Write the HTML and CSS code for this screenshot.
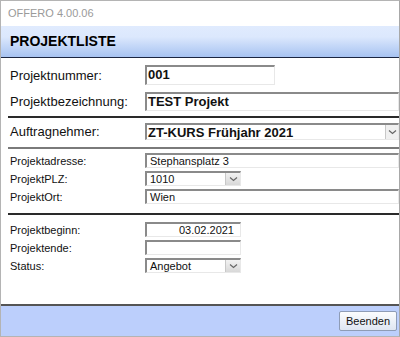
FILE: index.html
```html
<!DOCTYPE html>
<html lang="de">
<head>
  <meta charset="UTF-8" />
  <title>OFFERO 4.00.06</title>
  <link rel="stylesheet" href="styles.css">
</head>
<body>
  <div class="window">
    <div class="titlebar">OFFERO 4.00.06</div>
    <header class="caption">PROJEKTLISTE</header>

    <main class="content">
      <section class="group group-top">
        <div class="row row-a">
          <label>Projektnummer:</label>
          <div class="field big short">001</div>
        </div>
        <div class="row row-b">
          <label>Projektbezeichnung:</label>
          <div class="field big">TEST Projekt</div>
        </div>
      </section>

      <section class="group group-firm">
        <div class="row row-c">
          <label>Auftragnehmer:</label>
          <div class="field big select">ZT-KURS Frühjahr 2021<span class="drop"><svg width="9" height="6" viewBox="0 0 9 6"><path d="M1 1.5 4.5 4.5 8 1.5" fill="none" stroke="#666" stroke-width="1.2"/></svg></span></div>
        </div>
      </section>

      <section class="group group-small">
        <div class="row">
          <label>Projektadresse:</label>
          <div class="field">Stephansplatz 3</div>
        </div>
        <div class="row">
          <label>ProjektPLZ:</label>
          <div class="field narrow select">1010<span class="drop"><svg width="9" height="6" viewBox="0 0 9 6"><path d="M1 1.5 4.5 4.5 8 1.5" fill="none" stroke="#666" stroke-width="1.2"/></svg></span></div>
        </div>
        <div class="row">
          <label>ProjektOrt:</label>
          <div class="field">Wien</div>
        </div>
      </section>

      <section class="group group-small last">
        <div class="row">
          <label>Projektbeginn:</label>
          <div class="field narrow right">03.02.2021</div>
        </div>
        <div class="row">
          <label>Projektende:</label>
          <div class="field narrow"></div>
        </div>
        <div class="row">
          <label>Status:</label>
          <div class="field narrow select">Angebot<span class="drop"><svg width="9" height="6" viewBox="0 0 9 6"><path d="M1 1.5 4.5 4.5 8 1.5" fill="none" stroke="#666" stroke-width="1.2"/></svg></span></div>
        </div>
      </section>
    </main>

    <footer class="footer">
      <button class="btn">Beenden</button>
    </footer>
  </div>
</body>
</html>
```

FILE: styles.css
```css
* {
  box-sizing: border-box;
  font-family: "Liberation Sans", Arial, sans-serif;
}
body {
  margin: 0;
  padding: 0;
  background: #fff;
}
.window {
  width: 400px;
  height: 337px;
  display: flex;
  flex-direction: column;
  border: 1px solid #b4b4b4;
  border-right-color: #a8a8a8;
  overflow: hidden;
}
.titlebar {
  height: 25px;
  padding-left: 7px;
  line-height: 25px;
  font-size: 11px;
  color: #9a9a9a;
}
.caption {
  height: 32px;
  padding-left: 9px;
  line-height: 31px;
  font-size: 14px;
  font-weight: bold;
  color: #000;
  background: linear-gradient(#e0ebfe 0%, #dce8fd 35%, #a7c3f1 100%);
  border-bottom: 1px solid #1b2640;
}

.content {
  flex: 1;
  padding: 7px 0 0 7px;
}
.group {
  border-bottom: 2px solid #2a2a2a;
}
.group-top {
  padding-bottom: 2px;
  margin-bottom: 5px;
}
.group-firm {
  padding-bottom: 4px;
  margin-bottom: 4px;
  border-bottom-color: #7a7a7a;
}
.group-small {
  padding-bottom: 6px;
  margin-bottom: 7px;
}
.group-small.last {
  border-bottom: none;
}

.row {
  display: grid;
  grid-template-columns: 137px 1fr;
  align-items: center;
  margin-bottom: 3px;
}
.row-a {
  margin-bottom: 7px;
}
.row label {
  padding-left: 2px;
  font-size: 11px;
  color: #111;
}
.group-top .row label,
.group-firm .row label {
  font-size: 13px;
}

.field {
  position: relative;
  height: 15px;
  padding: 0 3px;
  font-size: 11px;
  line-height: 13px;
  color: #111;
  background: #fff;
  border-style: solid;
  border-width: 2px 1px 1px 2px;
  border-color: #8a8a8a #e8e8e8 #e8e8e8 #8a8a8a;
  white-space: nowrap;
}
.big {
  height: 19px;
  font-size: 13px;
  font-weight: bold;
  line-height: 16px;
  padding-left: 1px;
}
.row-a .big {
  height: 20px;
}
.row-c .big {
  height: 17px;
  line-height: 15px;
}
.short {
  width: 130px;
}
.narrow {
  width: 96px;
}
.right {
  text-align: right;
  padding-right: 6px;
}
.select .drop {
  position: absolute;
  top: 0;
  right: 0;
  width: 15px;
  height: 100%;
  display: flex;
  align-items: center;
  justify-content: center;
  background: linear-gradient(#f2f2f2, #d8d8d8);
  border-left: 1px solid #c8c8c8;
}
.row-c .drop {
  width: 13px;
  background: #f0f0f0;
}

.footer {
  height: 32px;
  display: flex;
  align-items: center;
  justify-content: flex-end;
  padding-right: 2px;
  background: #bccffc;
  border-top: 2px solid #555;
}
.btn {
  width: 58px;
  height: 20px;
  padding: 0;
  font-size: 11px;
  color: #111;
  border: 1px solid #8e9cb6;
  border-radius: 2px;
  background: linear-gradient(#fbfcfe, #dfe6f2);
}
```
